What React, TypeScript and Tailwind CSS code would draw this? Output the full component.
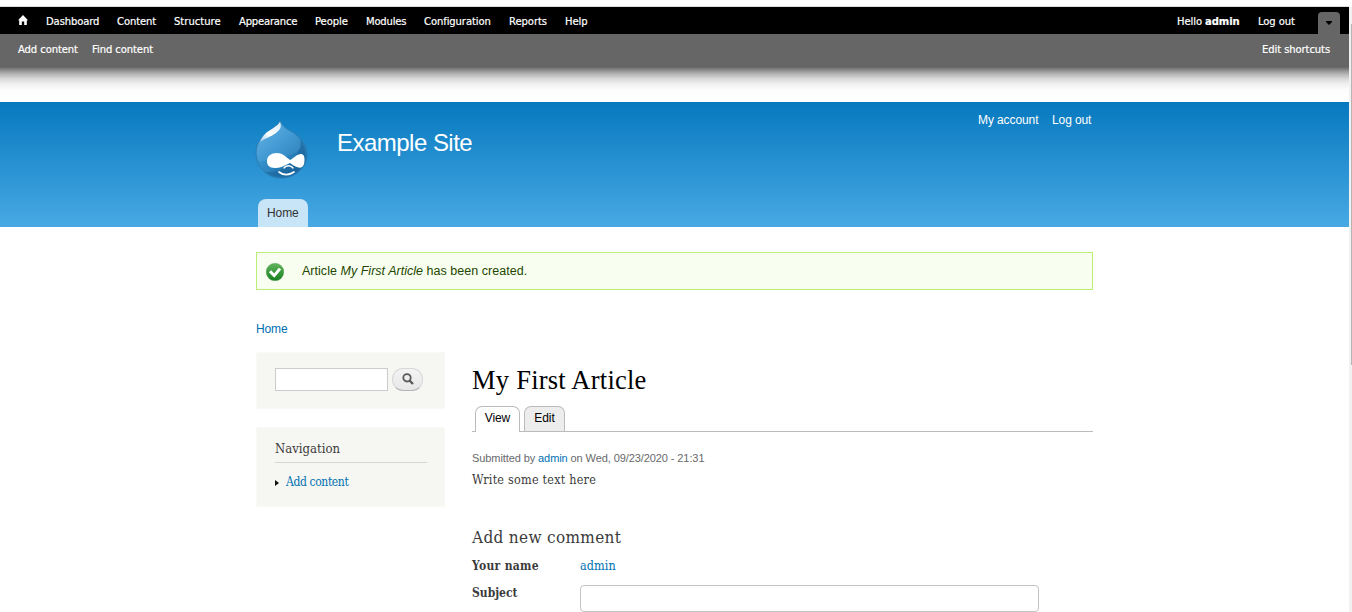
import { ReactNode } from "react";

const menu: [string, string][] = [
  ["Dashboard", "w-[53px] mr-[18px] tracking-[-0.1px]"],
  ["Content", "w-[39px] mr-[18px] tracking-[-0.1px]"],
  ["Structure", "w-[47px] mr-[18px] tracking-[0.02px]"],
  ["Appearance", "w-[58px] mr-[18px] tracking-[-0.18px]"],
  ["People", "w-[33px] mr-[18px] tracking-[-0.05px]"],
  ["Modules", "w-[40px] mr-[18px] tracking-[-0.2px]"],
  ["Configuration", "w-[67px] mr-[18px] tracking-[-0.08px]"],
  ["Reports", "w-[38px] mr-[18px] tracking-[-0.05px]"],
  ["Help", "w-[23px]"],
];

function Toolbar() {
  return (
    <div className="font-['DejaVu_Sans',sans-serif] text-[10px] tracking-[-0.08px] font-normal text-white [-webkit-text-stroke:0.2px_white] whitespace-nowrap leading-[13px]">
      <nav className="flex h-[27px] items-start bg-black pt-[8px]">
        <svg className="ml-[18px] mr-[18px] h-[10px] w-[10px]" viewBox="0 0 10 10" fill="#fff">
          <path d="M5 0L10 5.3H8.8V10H6.2V6.6H3.8V10H1.2V5.3H0L5 0Z" />
        </svg>
        {menu.map(([label, size]) => (
          <a key={label} className={size}>{label}</a>
        ))}
        <span className="ml-auto w-[63px]">Hello <b>admin</b></span>
        <a className="ml-[18px] w-[38px]">Log out</a>
        <span className="-mt-[3px] ml-[22px] mr-[9px] flex h-[22px] w-[22px] items-center justify-center rounded-t-[4px] bg-[#666]">
          <svg className="h-[4px] w-[6px]" viewBox="0 0 6 4"><path d="M0 0H6V1L3 4L0 1Z" fill="#000" /></svg>
        </span>
      </nav>
      <div className="flex h-[32px] bg-[#666] pl-[18px] pr-[18px] pt-[9px]">
        <a className="w-[60px]">Add content</a>
        <a className="ml-[14px] w-[62px]">Find content</a>
        <a className="ml-auto w-[69px]">Edit shortcuts</a>
      </div>
      <div className="h-[36px] bg-[linear-gradient(to_bottom,#626262_0px,#666_1px,#8a8a8a_4px,#b4b4b4_8px,#dadada_13px,#f0f0f0_18px,#fcfcfc_24px,#fff_32px)]" />
    </div>
  );
}

function Druplicon() {
  return (
    <svg className="h-[60px] w-[53px]" viewBox="0 0 53 60">
      <defs>
        <linearGradient id="drop" x1="0" y1="0" x2=".75" y2="1">
          <stop offset="0" stopColor="#69b5e6" />
          <stop offset=".5" stopColor="#3792cd" />
          <stop offset="1" stopColor="#1867a0" />
        </linearGradient>
        <linearGradient id="shine" x1="1" y1="0" x2="0" y2="1">
          <stop offset="0" stopColor="#fff" stopOpacity=".8" />
          <stop offset=".6" stopColor="#fff" />
          <stop offset="1" stopColor="#fff" stopOpacity=".4" />
        </linearGradient>
      </defs>
      <path d="M25 1C27 8 33 10 39 14C46 19 52 25 52 35C52 49 40 59 26 59C12 59 1 48 1 34C1 24 6 18 13 13C19 9 23 7 25 1Z" fill="url(#drop)" stroke="#2b78ad" strokeWidth=".8" />
      <path d="M46 21C53 32 50 47 40 53C31 59 18 59 10 53C28 55 44 42 46 21Z" fill="#15598b" opacity=".38" />
      <path d="M2 34C2 24 8 17 15 13C21 9 24 7 25 4C27 9 32 11 38 14C44 18 46 22 46 28C40 38 25 38 4 43Z" fill="#73bbec" opacity=".18" />
      <path d="M25 3C27 8 25 11 21 14C16 18 10 19 5 23C8 15 12 13 17 10C21 7 23 6 25 3Z" fill="url(#shine)" />
      <path d="M35 41C39 39 42 35 46 35C50 35 50 41 49 45C47 51 42 49 35 44C29 47 25 49 20 49C14 49 12 46 12 42C12 37 16 34 22 34C28 34 31 38 35 41Z" fill="#fff" />
      <path d="M29 49C31 46 36 46 38 49" fill="none" stroke="#fff" strokeWidth="1.4" strokeLinecap="round" />
      <path d="M24 53C28 56.5 34 56.5 39 53" fill="none" stroke="#fff" strokeWidth="1.7" strokeLinecap="round" />
    </svg>
  );
}

function Header() {
  return (
    <header className="flex h-[125px] bg-[linear-gradient(to_bottom,#0779bf,#48a9e4)] pl-[255px] font-['Liberation_Sans',sans-serif] text-white">
      <div className="flex w-[82px] flex-col pt-[17px]">
        <Druplicon />
        <a className="ml-[3px] mt-[20px] h-[28px] w-[50px] rounded-t-[8px] bg-[#c8e4f7] pl-[9px] text-[12px] leading-[28px] tracking-[-0.1px] text-[#333]">Home</a>
      </div>
      <h1 className="mt-[26px] w-[300px] text-[24px] leading-[30px] tracking-[-0.52px]">Example Site</h1>
      <div className="ml-auto mr-[257px] flex pt-[10px] text-[12px] leading-[16px] tracking-[-0.1px] whitespace-nowrap">
        <a className="w-[74px]">My account</a>
        <a className="w-[40px]">Log out</a>
      </div>
    </header>
  );
}

function Status() {
  return (
    <div className="flex h-[38px] w-[837px] items-center border border-[#be7] bg-[#f8fff0] pl-[9px] font-['Liberation_Sans',sans-serif] text-[12.5px] tracking-[0.03px] text-[#234600]">
      <svg className="mr-[18px] mt-[1px] h-[18px] w-[18px]" viewBox="0 0 18 18">
        <defs>
          <linearGradient id="ok" x1="0" y1="0" x2="0" y2="1">
            <stop offset="0" stopColor="#62b45c" />
            <stop offset="1" stopColor="#168021" />
          </linearGradient>
        </defs>
        <circle cx="9" cy="9" r="8.8" fill="url(#ok)" stroke="#4c9b4c" strokeWidth=".4" />
        <path d="M4 8.2L8.2 12.6L14 5.6" fill="none" stroke="#fff" strokeWidth="3" />
      </svg>
      <span>Article <em>My First Article</em> has been created.</span>
    </div>
  );
}

function Block({ className, children }: { className: string; children: ReactNode }) {
  return <section className={`w-[189px] border border-[#f9f9f5] bg-[#f6f6f2] pl-[18px] ${className}`}>{children}</section>;
}

function Sidebar() {
  return (
    <aside className="w-[189px]">
      <Block className="flex h-[57px] pt-[15px]">
        <input className="h-[23px] w-[113px] border border-[#ccc] bg-white" />
        <button className="ml-[4px] flex h-[23px] w-[31px] items-center justify-center rounded-[11px] border border-[#d8d8d8] border-b-[#b4b4b4] bg-[linear-gradient(#f3f3f3,#e7e7e7)]">
          <svg className="-mt-px h-[12px] w-[12px]" viewBox="0 0 12 12" fill="none" stroke="#5a5a5a">
            <circle cx="5" cy="4.8" r="3.7" strokeWidth="1.8" />
            <path d="M7.6 7.6L11 11" strokeWidth="2.3" />
          </svg>
        </button>
      </Block>
      <Block className="mt-[18px] h-[80px] pt-[9px]">
        <h2 className="h-[26px] w-[152px] border-b border-[#d6d6d6] font-['DejaVu_Serif_Condensed','DejaVu_Serif',serif] text-[13px] leading-[24px] text-[#3b3b3b]">Navigation</h2>
        <div className="flex h-[37px] items-center">
          <svg className="mr-[7px] mt-[3px] h-[6px] w-[4px]" viewBox="0 0 4 6"><path d="M0 0L4 3L0 6Z" fill="#111" /></svg>
          <a className="font-['DejaVu_Serif_Condensed','DejaVu_Serif',serif] text-[12px] leading-[18px] tracking-[-0.38px] text-[#0071b3]">Add content</a>
        </div>
      </Block>
    </aside>
  );
}

function Article() {
  return (
    <main className="ml-[27px] w-[621px] pt-[11px] font-['DejaVu_Serif_Condensed','DejaVu_Serif',serif] text-[#3b3b3b]">
      <h1 className="h-[43px] font-['Liberation_Serif',serif] text-[26.5px] leading-[34px] tracking-[0.24px] text-black">My First Article</h1>
      <div className="flex h-[26px] border-b border-[#bbb] pl-[3px] font-['Liberation_Sans',sans-serif] text-[12px] leading-[23px] tracking-[-0.1px] text-black">
        <a className="mr-[4px] h-[26px] w-[45px] rounded-t-[7px] border border-b-0 border-[#bbb] bg-white text-center">View</a>
        <a className="h-[25px] w-[41px] rounded-t-[7px] border border-b-0 border-[#bbb] bg-[#ededed] text-center">Edit</a>
      </div>
      <p className="mt-[17px] font-['Liberation_Sans',sans-serif] text-[11px] leading-[18px] tracking-[-0.09px] text-[#68696b]">Submitted by <a className="text-[#0071b3]">admin</a> on Wed, 09/23/2020 - 21:31</p>
      <p className="mt-[3px] text-[12.5px] leading-[20px] tracking-[0.22px]">Write some text here</p>
      <h2 className="mt-[35px] text-[17px] leading-[24px] tracking-[0.34px]">Add new comment</h2>
      <div className="mt-[7px] flex h-[29px] text-[12px] leading-[20px]">
        <b className="w-[108px] tracking-[0.3px]">Your name</b>
        <a className="text-[12.5px] tracking-[0.1px] text-[#0071b3]">admin</a>
      </div>
      <div className="flex text-[12px] leading-[16px]">
        <b className="w-[108px]">Subject</b>
        <input className="h-[27px] w-[459px] rounded-[4px] border border-[#c4c4c4]" />
      </div>
    </main>
  );
}

export default function App() {
  return (
    <div className="flex h-[612px] w-[1352px] overflow-hidden bg-white font-['Liberation_Serif',serif]">
      <div className="w-[1349px]">
        <div className="h-[7px] border-b border-[#dadce0]" />
        <Toolbar />
        <Header />
        <div className="pl-[256px] pt-[25px]">
          <Status />
          <div className="mt-[29px] h-[33px] font-['Liberation_Sans',sans-serif] text-[12px] leading-[20px] tracking-[-0.15px] text-[#0071b3]">Home</div>
          <div className="flex">
            <Sidebar />
            <Article />
          </div>
        </div>
      </div>
      <div className="mt-[7px] flex w-[3px] justify-end bg-[#f1f1f1]">
        <div className="mt-[17px] h-[341px] w-px bg-[#b5b5b5]" />
      </div>
    </div>
  );
}
